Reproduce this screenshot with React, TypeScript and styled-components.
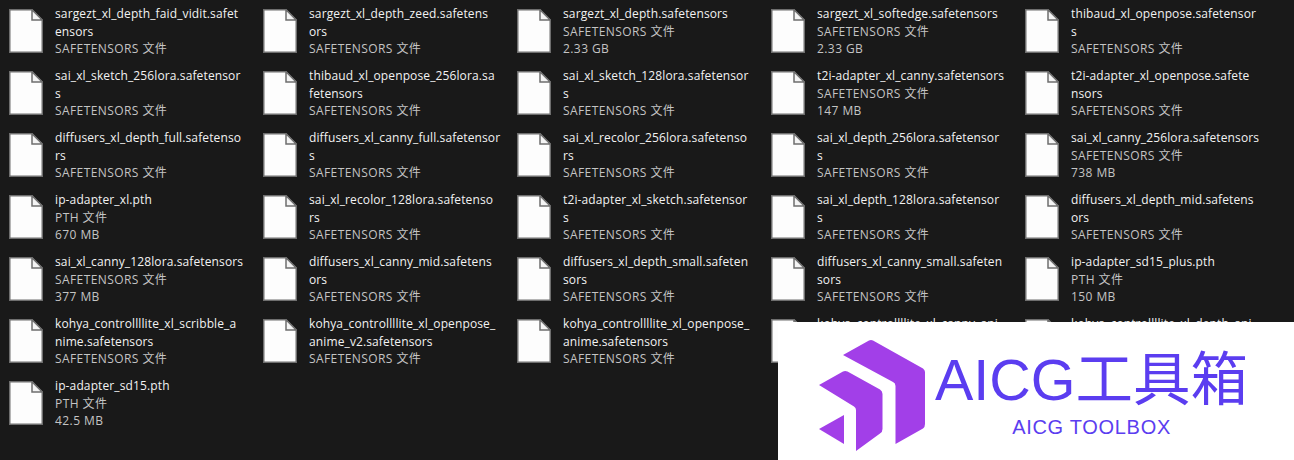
import * as React from 'react'
import styled, { createGlobalStyle } from 'styled-components'

interface FileItem {
  name: string[]
  kind?: string
  size?: string
}

const S = 'SAFETENSORS 文件'
const P = 'PTH 文件'

const files: FileItem[] = [
  { name: ['sargezt_xl_depth_faid_vidit.safet', 'ensors'], kind: S },
  { name: ['sargezt_xl_depth_zeed.safetens', 'ors'], kind: S },
  { name: ['sargezt_xl_depth.safetensors'], kind: S, size: '2.33 GB' },
  { name: ['sargezt_xl_softedge.safetensors'], kind: S, size: '2.33 GB' },
  { name: ['thibaud_xl_openpose.safetensor', 's'], kind: S },
  { name: ['sai_xl_sketch_256lora.safetensor', 's'], kind: S },
  { name: ['thibaud_xl_openpose_256lora.sa', 'fetensors'], kind: S },
  { name: ['sai_xl_sketch_128lora.safetensor', 's'], kind: S },
  { name: ['t2i-adapter_xl_canny.safetensors'], kind: S, size: '147 MB' },
  { name: ['t2i-adapter_xl_openpose.safete', 'nsors'], kind: S },
  { name: ['diffusers_xl_depth_full.safetenso', 'rs'], kind: S },
  { name: ['diffusers_xl_canny_full.safetensor', 's'], kind: S },
  { name: ['sai_xl_recolor_256lora.safetenso', 'rs'], kind: S },
  { name: ['sai_xl_depth_256lora.safetensor', 's'], kind: S },
  { name: ['sai_xl_canny_256lora.safetensors'], kind: S, size: '738 MB' },
  { name: ['ip-adapter_xl.pth'], kind: P, size: '670 MB' },
  { name: ['sai_xl_recolor_128lora.safetenso', 'rs'], kind: S },
  { name: ['t2i-adapter_xl_sketch.safetensor', 's'], kind: S },
  { name: ['sai_xl_depth_128lora.safetensor', 's'], kind: S },
  { name: ['diffusers_xl_depth_mid.safetens', 'ors'], kind: S },
  { name: ['sai_xl_canny_128lora.safetensors'], kind: S, size: '377 MB' },
  { name: ['diffusers_xl_canny_mid.safetens', 'ors'], kind: S },
  { name: ['diffusers_xl_depth_small.safeten', 'sors'], kind: S },
  { name: ['diffusers_xl_canny_small.safeten', 'sors'], kind: S },
  { name: ['ip-adapter_sd15_plus.pth'], kind: P, size: '150 MB' },
  { name: ['kohya_controllllite_xl_scribble_a', 'nime.safetensors'], kind: S },
  { name: ['kohya_controllllite_xl_openpose_', 'anime_v2.safetensors'], kind: S },
  { name: ['kohya_controllllite_xl_openpose_', 'anime.safetensors'], kind: S },
  // the rest of these two is behind the watermark
  { name: ['kohya_controllllite_xl_canny_ani'] },
  { name: ['kohya_controllllite_xl_depth_ani'] },
  { name: ['ip-adapter_sd15.pth'], kind: P, size: '42.5 MB' }
]

const GlobalStyle = createGlobalStyle`
  html, body {
    margin: 0;
    height: 100%;
    overflow: hidden;
    background: #191919;
  }
`

const Page = styled.div`
  position: relative;
  width: 1294px;
  height: 460px;
  overflow: hidden;
  background: #191919;
  font-family: "Open Sans", "Noto Sans CJK SC", sans-serif;
`

const Grid = styled.div`
  display: grid;
  grid-template-columns: repeat(5, 254px);
  grid-auto-rows: 62px;
  padding-left: 9px;
`

const Cell = styled.div`
  display: flex;
  align-items: flex-start;
  gap: 12px;
  padding-top: 9px;
`

const IconWrap = styled.svg`
  flex: none;
  width: 34px;
  height: 44px;
`

const Info = styled.div`
  display: flex;
  flex-direction: column;
  margin-top: -4px;
  font-size: 12px;
  line-height: 17.5px;
`

const NameLine = styled.div`
  color: #f2f2f2;
  white-space: nowrap;
  letter-spacing: 0.12px;
`

const Detail = styled.div`
  color: #c4c4c4;
  white-space: nowrap;
  letter-spacing: 0.42px;
`

const Watermark = styled.div`
  position: absolute;
  left: 778px;
  top: 322px;
  width: 516px;
  height: 138px;
  background: #fff;
  display: flex;
  align-items: flex-start;
  padding: 17px 0 0 41px;
  box-sizing: border-box;
  gap: 10px;
`

const Mark = styled.svg`
  flex: none;
  width: 106px;
  height: 112px;
`

const Brand = styled.div`
  display: flex;
  flex-direction: column;
  align-items: center;
  color: #5b3df0;
  font-family: "Liberation Sans", "Noto Sans CJK SC", sans-serif;
`

const BrandTitle = styled.div`
  font-size: 57.5px;
  line-height: 64px;
  white-space: nowrap;
  margin-top: 9px;
`

const BrandSub = styled.div`
  font-size: 20px;
  line-height: 24px;
  letter-spacing: 0.7px;
  white-space: nowrap;
  margin-top: 3px;
`

const FileIcon = () => (
  <IconWrap viewBox='0 0 34 44'>
    <path d='M0.75 0.75H23L33.25 11V43.25H0.75Z' fill='#fdfdfd' stroke='#6e6e6e' strokeWidth='1.5' />
    <path d='M23 0.75V11H33.25Z' fill='#f4f4f4' stroke='#6e6e6e' strokeWidth='1.5' />
  </IconWrap>
)

const App = () => (
  <Page>
    <GlobalStyle />
    <Grid>
      {files.map((file) => (
        <Cell key={file.name.join('')}>
          <FileIcon />
          <Info>
            {file.name.map((line) => <NameLine key={line}>{line}</NameLine>)}
            {file.kind && <Detail>{file.kind}</Detail>}
            {file.size && <Detail>{file.size}</Detail>}
          </Info>
        </Cell>
      ))}
    </Grid>
    <Watermark>
      <Mark viewBox='0 0 106 112'>
        <path
          d='M24 16 L50 1.5 Q52 0.5 54 1.5 L104 29.5 Q106 31 106 33 L106 85 Q106 88 104 89.5 L76.5 105 L76.5 47 Q76.5 44 74 43 Z'
          fill='#a23fe8'
        />
        <path
          d='M0 46 L24 32.5 Q26 31.5 28.5 32.5 L61 50.5 Q63.5 52 63.5 55 L63.5 90 Q63.5 93 61 94.5 L37 112 L37 71 Q37 68.5 35 67.5 Z'
          fill='#a23fe8'
        />
        <path d='M0 90 L25 76 L25 105 Z' fill='#a23fe8' />
      </Mark>
      <Brand>
        <BrandTitle>AICG工具箱</BrandTitle>
        <BrandSub>AICG TOOLBOX</BrandSub>
      </Brand>
    </Watermark>
  </Page>
)

export default App
